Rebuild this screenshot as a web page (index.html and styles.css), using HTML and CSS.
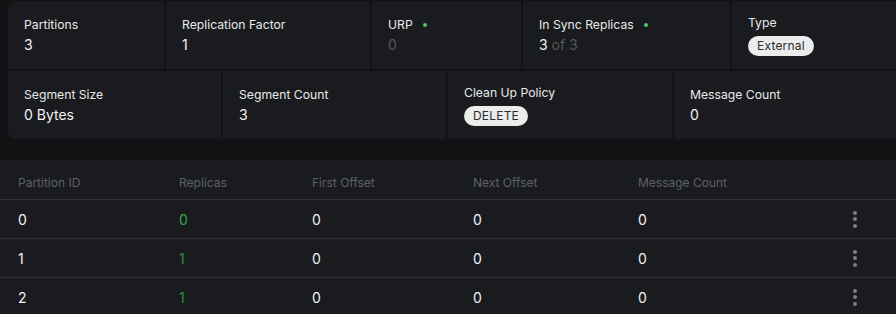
FILE: index.html
```html
<!DOCTYPE html>
<html lang="en">
<head>
    <meta charset="UTF-8">
    <title>Topic Overview</title>
    <link rel="stylesheet" href="styles.css">
</head>
<body>
    <div class="stats">
        <div class="stats-row top">
            <div class="stat">
                <span class="stat-label">Partitions</span>
                <span class="stat-value">3</span>
            </div>
            <div class="stat">
                <span class="stat-label">Replication Factor</span>
                <span class="stat-value">1</span>
            </div>
            <div class="stat">
                <span class="stat-label">URP <i class="dot"></i></span>
                <span class="stat-value muted">0</span>
            </div>
            <div class="stat">
                <span class="stat-label">In Sync Replicas <i class="dot"></i></span>
                <span class="stat-value">3 <span class="muted">of 3</span></span>
            </div>
            <div class="stat tight">
                <span class="stat-label">Type</span>
                <span class="tag">External</span>
            </div>
        </div>
        <div class="stats-row bottom">
            <div class="stat">
                <span class="stat-label">Segment Size</span>
                <span class="stat-value">0 Bytes</span>
            </div>
            <div class="stat">
                <span class="stat-label">Segment Count</span>
                <span class="stat-value">3</span>
            </div>
            <div class="stat tight">
                <span class="stat-label">Clean Up Policy</span>
                <span class="tag">DELETE</span>
            </div>
            <div class="stat">
                <span class="stat-label">Message Count</span>
                <span class="stat-value">0</span>
            </div>
        </div>
    </div>

    <div class="partitions">
        <div class="row head">
            <span>Partition ID</span>
            <span>Replicas</span>
            <span>First Offset</span>
            <span>Next Offset</span>
            <span>Message Count</span>
            <span></span>
        </div>
        <div class="row">
            <span>0</span>
            <span class="green bright">0</span>
            <span>0</span>
            <span>0</span>
            <span>0</span>
            <span class="kebab"><i></i><i></i><i></i></span>
        </div>
        <div class="row">
            <span>1</span>
            <span class="green">1</span>
            <span>0</span>
            <span>0</span>
            <span>0</span>
            <span class="kebab"><i></i><i></i><i></i></span>
        </div>
        <div class="row">
            <span>2</span>
            <span class="green">1</span>
            <span>0</span>
            <span>0</span>
            <span>0</span>
            <span class="kebab"><i></i><i></i><i></i></span>
        </div>
    </div>
</body>
</html>
```

FILE: styles.css
```css
* {
    margin: 0;
    padding: 0;
    box-sizing: border-box;
}

body {
    font-family: 'Inter', 'Roboto', sans-serif;
    background: #111214;
    color: #f1f1f2;
    overflow: hidden;
}

.stats {
    margin: 1px -10px 0 8px;
    border-radius: 8px;
    overflow: hidden;
    display: flex;
    flex-direction: column;
    gap: 2px;
}

.stats-row {
    display: grid;
    gap: 2px;
    height: 68px;
}

.stats-row.top {
    grid-template-columns: 156px 204px 149px 207px 1fr;
}

.stats-row.bottom {
    grid-template-columns: 213px 223px 224px 1fr;
}

.stat {
    background: #1a1b1e;
    padding: 0 16px;
    display: flex;
    flex-direction: column;
    justify-content: center;
}

.stat-label {
    font-size: 12.2px;
    line-height: 20px;
    color: #e9e9ea;
    display: flex;
    align-items: center;
}

.stat.tight {
    gap: 4px;
}

.stat.tight .stat-label {
    line-height: 18px;
}

.stat-value {
    font-size: 14px;
    line-height: 20px;
    color: #f3f3f4;
}

.muted {
    color: #53575d;
}

.dot {
    width: 4px;
    height: 4px;
    border-radius: 50%;
    background: #4cc764;
    margin-left: 10px;
}

.tag {
    align-self: flex-start;
    height: 20px;
    line-height: 20px;
    padding: 0 9px;
    border-radius: 10px;
    background: #ececec;
    color: #2b2c2f;
    font-size: 12px;
    letter-spacing: 0.2px;
}

.partitions {
    margin-top: 21px;
    background: #1a1b1e;
}

.row {
    display: grid;
    grid-template-columns: 161px 133px 161px 165px 1fr 43px;
    padding-left: 18px;
    height: 39px;
    align-items: center;
    border-bottom: 1px solid #2e3034;
    font-size: 14px;
    color: #f1f1f2;
}

.row.head {
    height: 40px;
    padding-top: 6px;
    font-size: 12px;
    color: #5d6167;
}

.green {
    color: #2f8c3c;
}

.green.bright {
    color: #39a548;
}

.kebab {
    display: flex;
    flex-direction: column;
    align-items: center;
    gap: 2.5px;
    width: 4px;
}

.kebab i {
    width: 4px;
    height: 4px;
    border-radius: 50%;
    background: #7b8088;
}
```
